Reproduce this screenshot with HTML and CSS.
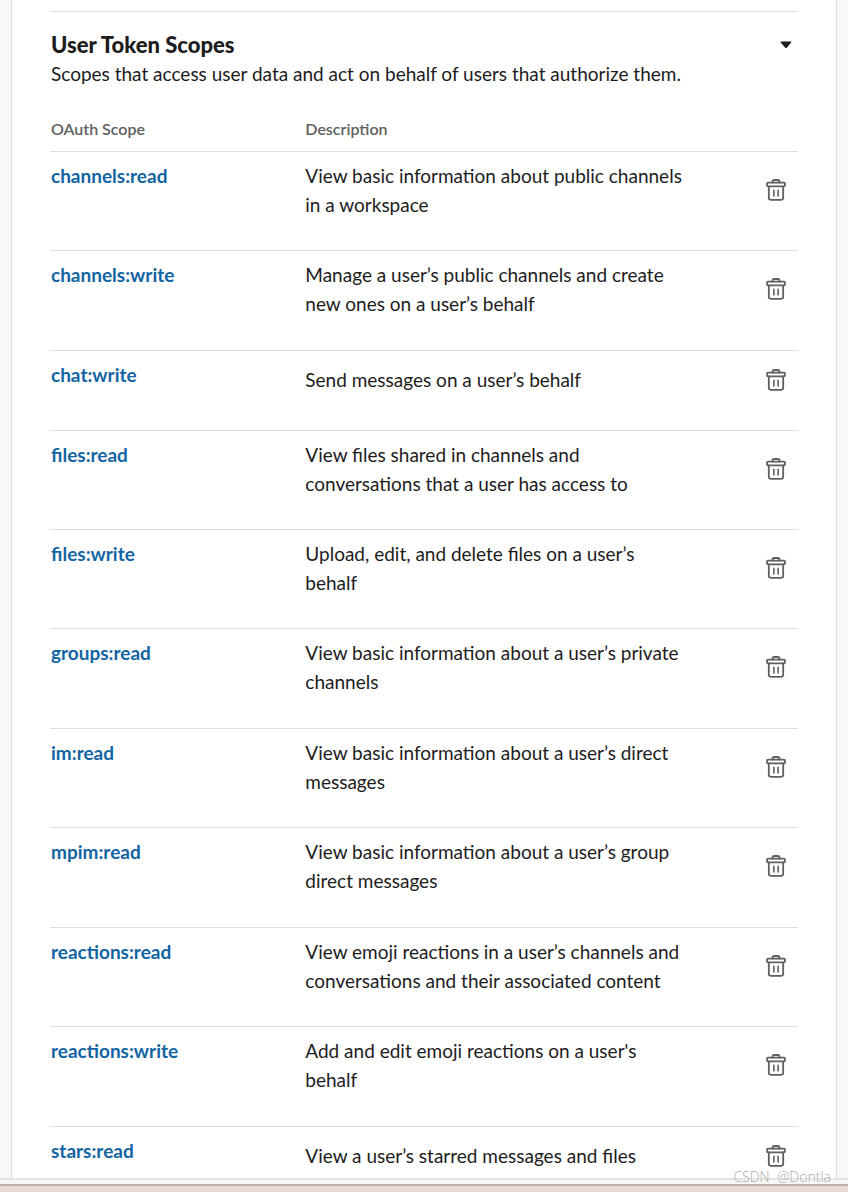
FILE: index.html
```
<!DOCTYPE html>
<html lang="en">
<head>
    <meta charset="UTF-8">
    <meta name="viewport" content="width=device-width, initial-scale=1.0">
    <title>User Token Scopes</title>
    <link rel="stylesheet" href="styles.css">
</head>
<body>
    <svg class="icon-defs" aria-hidden="true">
        <symbol id="trash" viewBox="0 0 20 22">
            <g fill="none" stroke="currentColor" stroke-width="1.8" stroke-linejoin="round" stroke-linecap="round">
                <path d="M6.5 3.5V2.6Q6.5 1 8.1 1h3.8q1.6 0 1.6 1.6v.9"/>
                <rect x="1" y="3.7" width="18" height="3.6" rx="1"/>
                <path d="M2.8 7.3v11.2q0 2.4 2.4 2.4h9.6q2.4 0 2.4-2.4V7.3"/>
                <path d="M7.9 11.3v5.6M12.1 11.3v5.6" stroke-width="1.6"/>
            </g>
        </symbol>
    </svg>

    <div class="window">
        <main class="card">
            <section class="scopes">
                <header class="scopes-header">
                    <h2>User Token Scopes</h2>
                    <button type="button" class="toggle-btn" aria-label="Collapse section">
                        <svg width="12" height="8" viewBox="0 0 12 8"><path d="M1.2.5h9.6q1 0 .4.9L7 6.5q-1 1-2 0L.8 1.4Q.2.5 1.2.5z" fill="currentColor"/></svg>
                    </button>
                </header>
                <p class="scopes-intro">Scopes that access user data and act on behalf of users that authorize them.</p>

                <table class="scopes-table">
                    <thead>
                        <tr>
                            <th class="col-scope" scope="col">OAuth Scope</th>
                            <th class="col-description" scope="col">Description</th>
                            <td></td>
                        </tr>
                    </thead>
                    <tbody>
                        <tr>
                            <td class="scope-name"><a href="#">channels:read</a></td>
                            <td>View basic information about public channels in a workspace</td>
                            <td class="scope-action"><button type="button" class="delete-btn" aria-label="Delete channels:read"><svg><use href="#trash"/></svg></button></td>
                        </tr>
                        <tr>
                            <td class="scope-name"><a href="#">channels:write</a></td>
                            <td>Manage a user’s public channels and create new ones on a user’s behalf</td>
                            <td class="scope-action"><button type="button" class="delete-btn" aria-label="Delete channels:write"><svg><use href="#trash"/></svg></button></td>
                        </tr>
                        <tr>
                            <td class="scope-name"><a href="#">chat:write</a></td>
                            <td>Send messages on a user’s behalf</td>
                            <td class="scope-action"><button type="button" class="delete-btn" aria-label="Delete chat:write"><svg><use href="#trash"/></svg></button></td>
                        </tr>
                        <tr>
                            <td class="scope-name"><a href="#">files:read</a></td>
                            <td>View files shared in channels and conversations that a user has access to</td>
                            <td class="scope-action"><button type="button" class="delete-btn" aria-label="Delete files:read"><svg><use href="#trash"/></svg></button></td>
                        </tr>
                        <tr>
                            <td class="scope-name"><a href="#">files:write</a></td>
                            <td>Upload, edit, and delete files on a user’s behalf</td>
                            <td class="scope-action"><button type="button" class="delete-btn" aria-label="Delete files:write"><svg><use href="#trash"/></svg></button></td>
                        </tr>
                        <tr>
                            <td class="scope-name"><a href="#">groups:read</a></td>
                            <td>View basic information about a user’s private channels</td>
                            <td class="scope-action"><button type="button" class="delete-btn" aria-label="Delete groups:read"><svg><use href="#trash"/></svg></button></td>
                        </tr>
                        <tr>
                            <td class="scope-name"><a href="#">im:read</a></td>
                            <td>View basic information about a user’s direct messages</td>
                            <td class="scope-action"><button type="button" class="delete-btn" aria-label="Delete im:read"><svg><use href="#trash"/></svg></button></td>
                        </tr>
                        <tr>
                            <td class="scope-name"><a href="#">mpim:read</a></td>
                            <td>View basic information about a user’s group direct messages</td>
                            <td class="scope-action"><button type="button" class="delete-btn" aria-label="Delete mpim:read"><svg><use href="#trash"/></svg></button></td>
                        </tr>
                        <tr>
                            <td class="scope-name"><a href="#">reactions:read</a></td>
                            <td>View emoji reactions in a user’s channels and conversations and their associated content</td>
                            <td class="scope-action"><button type="button" class="delete-btn" aria-label="Delete reactions:read"><svg><use href="#trash"/></svg></button></td>
                        </tr>
                        <tr>
                            <td class="scope-name"><a href="#">reactions:write</a></td>
                            <td>Add and edit emoji reactions on a user's behalf</td>
                            <td class="scope-action"><button type="button" class="delete-btn" aria-label="Delete reactions:write"><svg><use href="#trash"/></svg></button></td>
                        </tr>
                        <tr>
                            <td class="scope-name"><a href="#">stars:read</a></td>
                            <td>View a user’s starred messages and files</td>
                            <td class="scope-action"><button type="button" class="delete-btn" aria-label="Delete stars:read"><svg><use href="#trash"/></svg></button></td>
                        </tr>
                    </tbody>
                </table>
            </section>
        </main>
    </div>
    <div class="window-edge"></div>
    <div class="desktop"></div>
    <div class="watermark">CSDN  @Dontla</div>
</body>
</html>
```
FILE: styles.css
```
* {
    box-sizing: border-box;
}

body {
    position: relative;
    display: flex;
    flex-direction: column;
    height: 100vh;
    margin: 0;
    overflow: hidden;
    background: #f8f8f8;
    color: #1d1c1d;
    font-family: Lato, sans-serif;
    font-size: 19px;
    line-height: 29px;
}

.icon-defs {
    display: none;
}

.window {
    flex: 1;
    min-height: 0;
    padding: 0 11px;
    overflow: hidden;
}

.card {
    min-height: 100%;
    padding: 11px 38px 0;
    background: #fff;
    border: solid #dddddd;
    border-width: 0 1px;
}

.scopes {
    padding-top: 18px;
    border-top: 1px solid #dddddd;
}

.scopes-header {
    display: flex;
    justify-content: space-between;
    align-items: center;
}

h2 {
    margin: 0;
    font-size: 22px;
    font-weight: 900;
}

.toggle-btn {
    display: flex;
    padding: 6px;
    border: none;
    background: none;
    color: #1d1c1d;
    cursor: pointer;
}

.scopes-intro {
    margin: 0 0 29px;
}

.scopes-header,
.scopes-intro {
    padding-left: 1px;
}

.scopes-table {
    width: 100%;
    table-layout: fixed;
    border-collapse: separate;
    border-spacing: 0;
}

.col-scope {
    width: 34%;
}

.col-description {
    width: 51%;
}

th {
    padding: 0 0 10px 1px;
    color: #616061;
    font-size: 16px;
    font-weight: 600;
    line-height: 24px;
    text-align: left;
}

thead th,
thead td {
    border-bottom: 1px solid #dddddd;
}

tbody td {
    padding: 9px 0 31px 1px;
    border-bottom: 1px solid #dddddd;
    vertical-align: middle;
}

/* two-line rows average between 99 and 100px */
tbody tr:nth-child(4n + 2) td,
tbody tr:nth-child(8) td {
    padding-bottom: 32px;
}

tbody .scope-name {
    vertical-align: top;
}

.scope-name a {
    color: #1264a3;
    font-weight: 700;
    text-decoration: none;
}

.scope-name a:hover {
    text-decoration: underline;
}

.delete-btn {
    display: flex;
    justify-content: center;
    align-items: center;
    width: 44px;
    height: 39px;
    margin-left: auto;
    padding: 0;
    border: none;
    background: none;
    color: #616061;
    cursor: pointer;
}

.delete-btn svg {
    width: 20px;
    height: 22px;
}

.window-edge {
    height: 8px;
    background: #f6f6f6;
    border-top: 2px solid #e2e2e2;
    border-bottom: 2px solid #b9adaa;
}

.desktop {
    height: 6px;
    background: #ead8d2;
}

.watermark {
    position: absolute;
    right: 17px;
    bottom: 5px;
    color: #aaaaaa;
    font-family: "Open Sans", sans-serif;
    font-size: 14px;
    font-weight: 300;
    line-height: 20px;
    text-shadow: -1px -1px 0 #fff;
    white-space: pre;
}
```
